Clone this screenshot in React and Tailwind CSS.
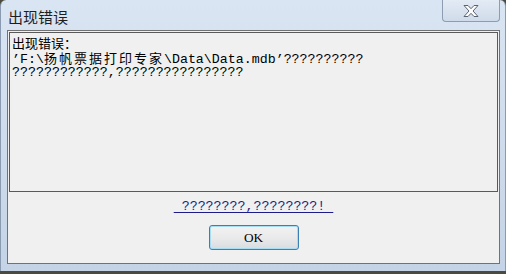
export default function App() {
  const mono = { fontFamily: '"Liberation Mono", "Noto Sans CJK SC", monospace' }
  const cjk = { fontFamily: '"Noto Sans CJK SC", sans-serif' }
  return (
    <div className="w-[506px] h-[274px] overflow-hidden bg-[#4b4a3e]">
      <div className="h-[271px] flex flex-col rounded-t-[6px] bg-gradient-to-b from-[#dae5f3] to-[#c4d3e6] border-x border-[#8a9bb1]">
        <div className="h-[30px] flex items-start justify-between">
          <span className="pl-[7px] pt-[7px] text-[15px] leading-[20px] text-[#1e1e1e]" style={cjk}>
            出现错误
          </span>
          <div className="mr-[5px] w-[58px] h-[22px] rounded-b-[4px] border border-t-0 border-[#8d9cb0] bg-gradient-to-b from-[#e3ebf5] to-[#cfdbea] flex items-center justify-center">
            <svg width="18" height="14" viewBox="0 0 18 14">
              <path
                d="M2 1.5h4l3 3.2 3-3.2h4l-5 5.5 5 5.5h-4l-3-3.2-3 3.2H2l5-5.5z"
                fill="#fff"
                stroke="#5a6370"
                strokeWidth="1"
                strokeLinejoin="round"
              />
            </svg>
          </div>
        </div>
        <div className="ml-[6px] mr-[5px] h-[234px] border border-[#727272] bg-[#f0f0f0] flex flex-col">
          <div
            className="mx-[1px] mt-[1px] h-[160px] border border-[#5a5a5a] pl-[2px] pt-[2px] text-[13.3px] leading-[15px] text-black"
            style={mono}
          >
            <div className="h-[15px] text-[13px] leading-[15px]" style={cjk}>
              出现错误：
            </div>
            <div className="h-[15px] whitespace-nowrap">
              ’F:\
              <span className="text-[13px] leading-[15px] tracking-[2px]" style={cjk}>
                扬帆票据打印专家
              </span>
              \Data\Data.mdb’??????????
            </div>
            <div className="h-[15px] whitespace-nowrap">????????????,????????????????</div>
          </div>
          <div className="mt-[7px] flex justify-center">
            <a
              href="#"
              className="text-[13.3px] leading-[15px] text-[#1c1c8a] underline underline-offset-2 whitespace-pre"
              style={mono}
            >
              {' ????????,????????! '}
            </a>
          </div>
          <div className="mt-[11px] flex justify-center">
            <button
              type="button"
              className="w-[90px] h-[25px] rounded-[3px] border border-[#3c7fb1] bg-gradient-to-b from-[#f2f2f2] via-[#eaeaea] to-[#d9dde0] shadow-[inset_0_0_0_1px_#a8dcf3] text-[13.3px] text-black"
              style={{ fontFamily: '"Liberation Serif", serif' }}
            >
              OK
            </button>
          </div>
        </div>
      </div>
    </div>
  )
}
